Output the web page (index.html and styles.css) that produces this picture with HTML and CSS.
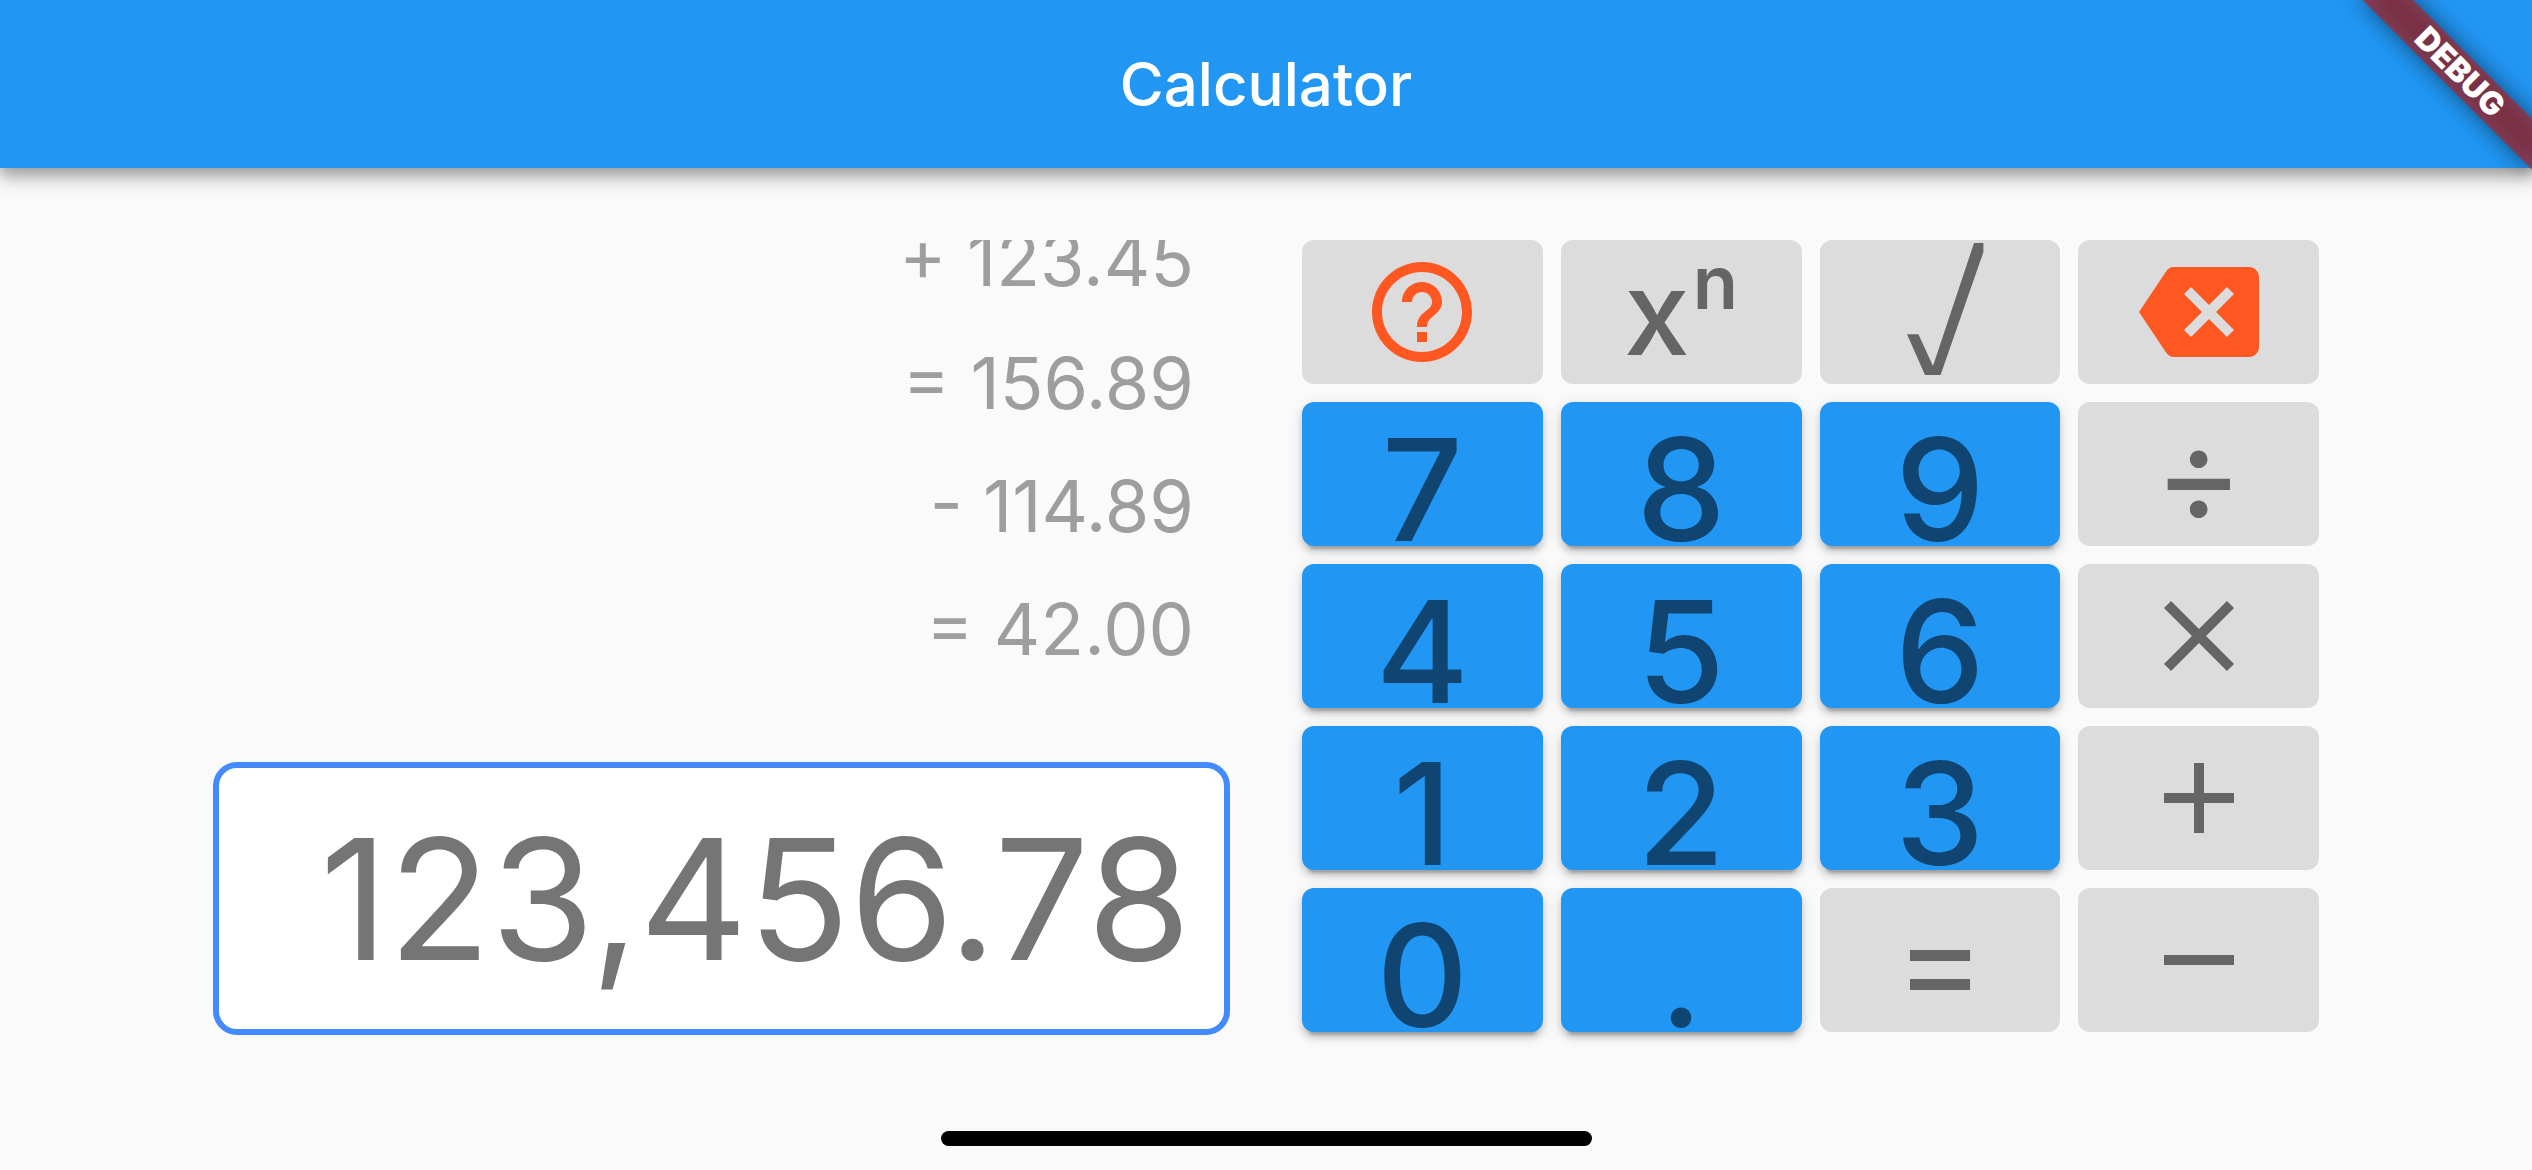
FILE: index.html
```html
<!DOCTYPE html>
<html lang="en">
<head>
<meta charset="utf-8">
<title>Calculator</title>
<link rel="stylesheet" href="styles.css">
</head>
<body>
<header class="app-bar">
  <h1 class="app-title">Calculator</h1>
</header>
<div class="banner-corner">
  <div class="banner-shadow"></div>
  <div class="banner">DEBUG</div>
</div>
<main class="calculator">
  <section class="readout">
    <ul class="history">
      <li>+ 123.45</li>
      <li>= 156.89</li>
      <li>- 114.89</li>
      <li>= 42.00</li>
    </ul>
    <input class="display" type="text" value="123,456.78" aria-label="Current value" readonly>
  </section>
  <section class="keypad">
    <button class="key" type="button" aria-label="Help">
      <svg class="icon accent" viewBox="0 0 24 24"><path d="M11 18h2v-2h-2v2zm1-16C6.480 2 2 6.480 2 12s4.480 10 10 10 10-4.480 10-10S17.520 2 12 2zm0 18c-4.410 0-8-3.590-8-8s3.590-8 8-8 8 3.590 8 8-3.590 8-8 8zm0-14c-2.210 0-4 1.790-4 4h2c0-1.100.9-2 2-2s2 .9 2 2c0 2-3 1.750-3 5h2c0-2.250 3-2.500 3-5 0-2.210-1.790-4-4-4z"/></svg>
    </button>
    <button class="key power" type="button"><span>x</span><sup>n</sup></button>
    <button class="key" type="button" aria-label="Square root">
      <svg class="root" viewBox="-12 0 89 138"><path d="M0 91.300H11.400L26 123 67 0H76.400V9L33.600 132H18z"/></svg>
    </button>
    <button class="key" type="button" aria-label="Backspace">
      <svg class="icon accent" viewBox="0 0 24 24"><path d="M22 3H7c-.69 0-1.230.350-1.590.880L0 12l5.410 8.110c.360.530.9.890 1.590.890h15c1.100 0 2-.9 2-2V5c0-1.100-.9-2-2-2zm-3 12.590L17.590 17 14 13.410 10.410 17 9 15.590 12.590 12 9 8.410 10.410 7 14 10.590 17.590 7 19 8.410 15.410 12 19 15.590z"/></svg>
    </button>
    <button class="key digit" type="button">7</button>
    <button class="key digit" type="button">8</button>
    <button class="key digit" type="button">9</button>
    <button class="key operator" type="button">÷</button>
    <button class="key digit" type="button">4</button>
    <button class="key digit" type="button">5</button>
    <button class="key digit" type="button">6</button>
    <button class="key" type="button" aria-label="Multiply">
      <svg class="icon" viewBox="0 0 24 24"><path d="M19 6.410L17.590 5 12 10.590 6.410 5 5 6.410 10.590 12 5 17.590 6.410 19 12 13.410 17.590 19 19 17.590 13.410 12z"/></svg>
    </button>
    <button class="key digit" type="button">1</button>
    <button class="key digit" type="button">2</button>
    <button class="key digit" type="button">3</button>
    <button class="key" type="button" aria-label="Add">
      <svg class="icon" viewBox="0 0 24 24"><path d="M19 13h-6v6h-2v-6H5v-2h6V5h2v6h6v2z"/></svg>
    </button>
    <button class="key digit" type="button">0</button>
    <button class="key digit" type="button">.</button>
    <button class="key operator" type="button">=</button>
    <button class="key" type="button" aria-label="Subtract">
      <svg class="icon" viewBox="0 0 24 24"><path d="M19 13H5v-2h14v2z"/></svg>
    </button>
  </section>
</main>
<footer class="home-area"><div class="home-indicator"></div></footer>
</body>
</html>
```
FILE: styles.css
```css
* {
  box-sizing: border-box;
}

body {
  margin: 0;
  min-height: 100vh;
  display: flex;
  flex-direction: column;
  background: #fafafa;
  font-family: Inter, "Liberation Sans", sans-serif;
}

.app-bar {
  height: 168px;
  display: flex;
  align-items: center;
  justify-content: center;
  background: #2196f3;
  box-shadow: 0 6px 12px rgba(0, 0, 0, 0.2), 0 12px 15px rgba(0, 0, 0, 0.14), 0 3px 30px rgba(0, 0, 0, 0.12);
}

.app-title {
  margin: 0;
  color: #fff;
  font-size: 60px;
  font-weight: 500;
  line-height: 72px;
}

/* Corner ribbon, turned 45 degrees around the top right corner */
.banner-corner {
  position: absolute;
  top: 0;
  right: 0;
  width: 240px;
  height: 240px;
  overflow: hidden;
}

.banner,
.banner-shadow {
  position: absolute;
  top: 84px;
  left: 120px;
  width: 240px;
  height: 36px;
  transform: rotate(45deg);
  transform-origin: 120px -84px;
}

.banner {
  background: rgba(183, 28, 28, 0.63);
  color: #fff;
  font-size: 32px;
  font-weight: 900;
  line-height: 36px;
  text-align: center;
}

.banner-shadow {
  background: rgba(0, 0, 0, 0.5);
  filter: blur(12px);
}

.calculator {
  flex: 1;
  display: grid;
  grid-template-columns: 1fr 1fr;
  gap: 72px;
  padding: 72px 213px;
}

.readout {
  display: flex;
  flex-direction: column;
  gap: 72px;
  min-width: 0;
}

.history {
  flex: 1 1 0;
  min-height: 0;
  margin: 0;
  padding: 0 36px;
  display: flex;
  flex-direction: column;
  justify-content: flex-end;
  overflow: hidden;
  list-style: none;
  color: #9e9e9e;
  font-size: 72px;
  line-height: 123px;
  text-align: right;
}

.history li {
  flex: none;
}

.display {
  width: 100%;
  height: 273px;
  padding: 0 33px;
  border: 6px solid #448aff;
  border-radius: 24px;
  outline: 0;
  background: #fff;
  color: #757575;
  font-family: inherit;
  font-size: 168px;
  text-align: right;
}

.keypad {
  display: grid;
  grid-template-columns: repeat(4, 1fr);
  grid-auto-rows: 144px;
  gap: 18px;
  align-content: start;
}

.key {
  display: flex;
  align-items: center;
  justify-content: center;
  min-width: 0;
  padding: 0;
  border: 0;
  border-radius: 12px;
  overflow: hidden;
  background: #dcdcdc;
  color: #656565;
  font-family: inherit;
  font-weight: 500;
}

/* Digits sit low on the key, as their line box is taller than the key */
.digit {
  align-items: flex-start;
  background: #2196f3;
  color: #0f4570;
  font-size: 142px;
  line-height: 174px;
  box-shadow: 0 9px 3px -6px rgba(0, 0, 0, 0.2), 0 6px 6px rgba(0, 0, 0, 0.14), 0 3px 15px rgba(0, 0, 0, 0.12);
}

.operator {
  font-size: 136px;
  font-weight: 400;
  line-height: 144px;
}

.power {
  gap: 3px;
  font-size: 118px;
  line-height: 144px;
}

.power sup {
  align-self: flex-start;
  font-size: 74px;
  font-weight: 600;
  line-height: 84px;
}

.root {
  width: 89px;
  height: 138px;
  fill: currentColor;
}

.icon {
  width: 120px;
  height: 120px;
  fill: currentColor;
}

.accent {
  color: #ff5722;
}

.home-area {
  height: 63px;
  display: flex;
  align-items: flex-end;
  justify-content: center;
  padding-bottom: 24px;
}

.home-indicator {
  width: 651px;
  height: 15px;
  border-radius: 8px;
  background: #000;
}
```
